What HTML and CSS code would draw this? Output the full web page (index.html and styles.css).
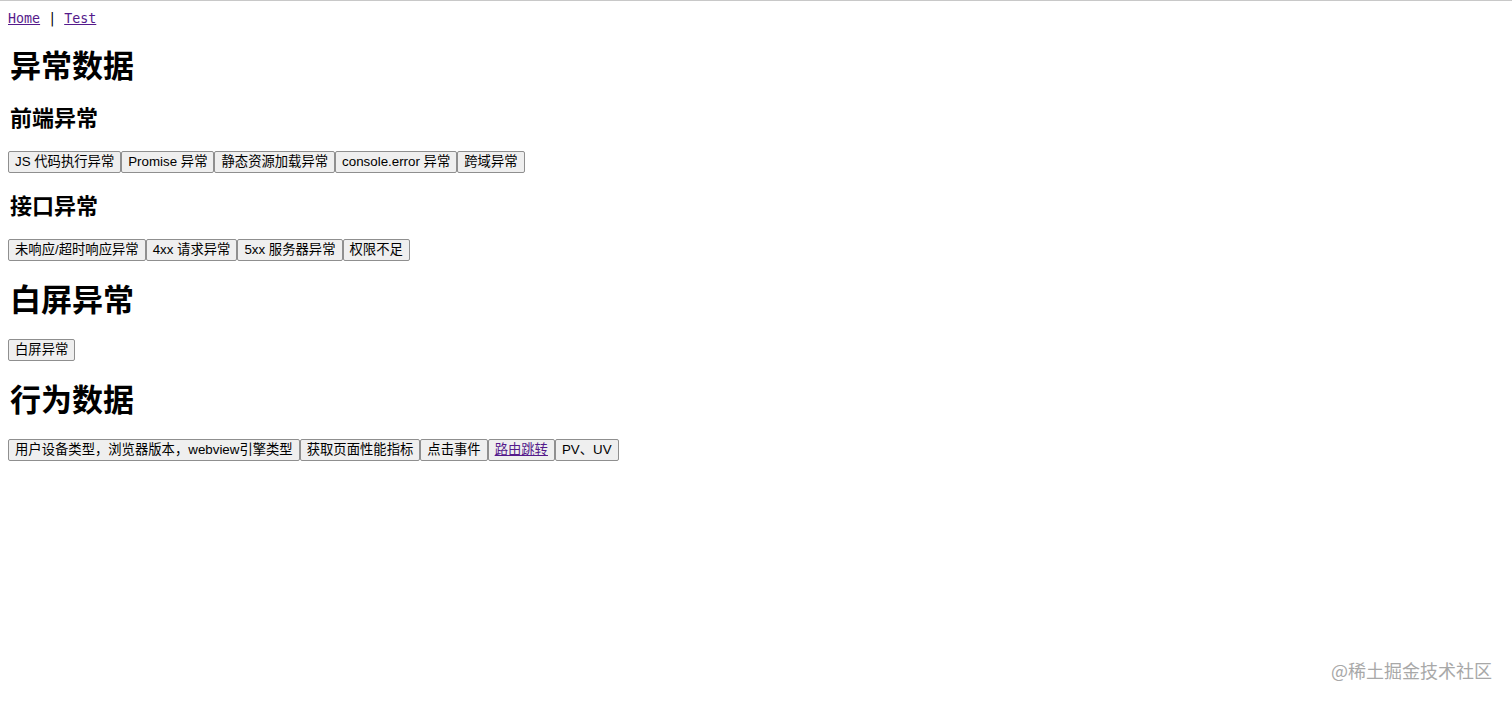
FILE: index.html
```html
<!DOCTYPE html>
<html lang="zh-CN">
<head>
<meta charset="utf-8">
<title>异常数据</title>
<link rel="stylesheet" href="styles.css">
</head>
<body>
<nav class="nav"><a href="#">Home</a> | <a href="#">Test</a></nav>
<h1 class="h1 first">异常数据</h1>
<h2 class="h2">前端异常</h2>
<div class="btns"><button class="btn">JS 代码执行异常</button><button class="btn">Promise 异常</button><button class="btn">静态资源加载异常</button><button class="btn">console.error 异常</button><button class="btn">跨域异常</button></div>
<h2 class="h2">接口异常</h2>
<div class="btns"><button class="btn">未响应/超时响应异常</button><button class="btn">4xx 请求异常</button><button class="btn">5xx 服务器异常</button><button class="btn">权限不足</button></div>
<h1 class="h1">白屏异常</h1>
<div class="btns"><button class="btn">白屏异常</button></div>
<h1 class="h1">行为数据</h1>
<div class="btns"><button class="btn">用户设备类型，浏览器版本，webview引擎类型</button><button class="btn">获取页面性能指标</button><button class="btn">点击事件</button><button class="btn"><a href="#">路由跳转</a></button><button class="btn">PV、UV</button></div>
<div class="watermark">@稀土掘金技术社区</div>
</body>
</html>
```
FILE: styles.css
```css
html {
  border-top: 1px solid #c8c8c8;
  background: #fff;
}
body {
  margin: 8px;
  font-family: "DejaVu Sans Mono", "Noto Sans CJK SC", monospace;
  color: #000;
}
.nav {
  font-size: 13.33px;
  line-height: 19px;
}
.nav a, .btn a {
  color: #551a8b;
}
.h1 {
  font-family: "Noto Sans CJK SC", serif;
  font-size: 31px;
  font-weight: 700;
  line-height: 37px;
  margin: 18px 0 23px 2px;
}
.h1.first {
  margin: 17px 0 20px 2px;
}
.h2 {
  font-family: "Noto Sans CJK SC", serif;
  font-size: 22px;
  font-weight: 700;
  line-height: 28px;
  margin: 17px 0 21px 2px;
}
.btns {
  display: flex;
}
.btn {
  font-family: "Liberation Sans", "Noto Sans CJK SC", sans-serif;
  font-size: 13.33px;
  line-height: 16px;
  height: 22px;
  padding: 1px 6px;
  margin: 0;
  border: 1px solid #8f8f8f;
  border-radius: 2px;
  background: #efefef;
  color: #000;
}
.watermark {
  position: absolute;
  right: 20px;
  top: 658px;
  font-family: "Noto Sans CJK SC", sans-serif;
  font-size: 18px;
  line-height: 24px;
  color: #a8a8a8;
}
```
